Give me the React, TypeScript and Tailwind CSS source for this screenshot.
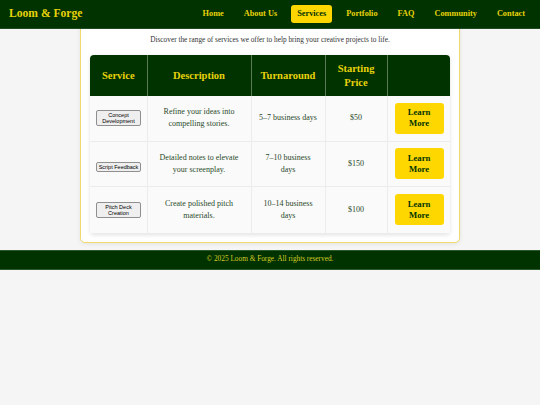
import React from "react";

const serif = { fontFamily: '"Liberation Serif", "DejaVu Serif", serif' };

const rows = [
  { svc: ["Concept", "Development"], desc: "Refine your ideas into compelling stories.", turn: "5–7 business days", price: "$50" },
  { svc: ["Script Feedback"], desc: "Detailed notes to elevate your screenplay.", turn: "7–10 business days", price: "$150" },
  { svc: ["Pitch Deck", "Creation"], desc: "Create polished pitch materials.", turn: "10–14 business days", price: "$100" },
];

const nav = ["Home", "About Us", "Services", "Portfolio", "FAQ", "Community", "Contact"];

export default function App() {
  return (
    <div className="min-h-[405px] bg-[#f5f5f5] text-[#1f3a1f]" style={serif}>
      <header className="fixed top-0 left-0 right-0 z-10 h-[29px] bg-[#003300] border-b border-[#1e4a1e] flex items-center justify-between pl-[9px] pr-[9px]">
        <div className="text-[11.6px] font-bold text-[#e8d20a] leading-[14px]">Loom &amp; Forge</div>
        <nav className="flex items-center gap-[8px]">
          {nav.map((n) => (
            <span
              key={n}
              className={
                "px-[6px] py-[4px] rounded-[3px] text-[8.3px] font-bold leading-[10px] " +
                (n === "Services" ? "bg-[#ffd700] text-[#003300]" : "text-[#e8d20a]")
              }
            >
              {n}
            </span>
          ))}
        </nav>
      </header>

      <main className="flex justify-center">
        <section className="w-[380px] bg-white border border-[#f0d96a] rounded-[5px] shadow-[0_1px_4px_rgba(0,0,0,0.08)] px-[9px] pt-[8px] pb-[8px]">
          <h2 className="text-center text-[15px] font-bold text-[#003300] leading-[20px]">Our Services</h2>
          <p className="text-center text-[7.3px] text-[#333] leading-[10px] mt-[6px]">
            Discover the range of services we offer to help bring your creative projects to life.
          </p>
          <div className="mt-[10px] rounded-[4px] overflow-hidden shadow-[0_1px_4px_rgba(0,0,0,0.12)]">
            <table className="w-full table-fixed border-collapse">
              <colgroup>
                <col className="w-[57px]" />
                <col className="w-[104px]" />
                <col className="w-[74px]" />
                <col className="w-[62px]" />
                <col className="w-[63px]" />
              </colgroup>
              <thead>
                <tr className="bg-[#003300] h-[41px]">
                  {["Service", "Description", "Turnaround", "Starting Price", ""].map((h, i) => (
                    <th
                      key={i}
                      className={
                        "text-[#e8d20a] text-[10.5px] font-bold leading-[14px] px-[4px] " +
                        (i < 4 ? "border-r border-[#5a7a5a]" : "")
                      }
                    >
                      {h === "Starting Price" ? (
                        <>
                          Starting
                          <br />
                          Price
                        </>
                      ) : (
                        h
                      )}
                    </th>
                  ))}
                </tr>
              </thead>
              <tbody>
                {rows.map((r, idx) => (
                  <tr key={idx} className={"bg-[#fafafa] " + (idx === 2 ? "h-[47px]" : "h-[45px]")}>
                    <td className="border-r border-b border-[#ececec] text-center px-[6px]">
                      <button
                        className="w-[45px] bg-[#efefef] border border-[#8f8f8f] rounded-[2px] text-[5.5px] leading-[6px] text-black py-[1px]"
                        style={{ fontFamily: '"Liberation Sans", Arial, sans-serif' }}
                      >
                        {r.svc.map((s, i) => (
                          <span key={i} className="block">
                            {s}
                          </span>
                        ))}
                      </button>
                    </td>
                    <td className="border-r border-b border-[#ececec] text-center text-[8px] leading-[12px] text-[#2a4a2a] px-[11px]">
                      {r.desc}
                    </td>
                    <td className="border-r border-b border-[#ececec] text-center text-[8px] leading-[12px] text-[#2a4a2a] px-[6px]">
                      {r.turn}
                    </td>
                    <td className="border-r border-b border-[#ececec] text-center text-[8px] leading-[12px] text-[#2a4a2a]">
                      {r.price}
                    </td>
                    <td className="border-b border-[#ececec] text-center px-[7px]">
                      <button className="w-[49px] h-[31px] bg-[#ffd700] rounded-[3px] text-[8.7px] font-bold leading-[11px] text-[#003300]">
                        Learn
                        <br />
                        More
                      </button>
                    </td>
                  </tr>
                ))}
              </tbody>
            </table>
          </div>
        </section>
      </main>

      <footer className="mt-[7px] h-[20px] bg-[#003300] border-y border-[#2a5a2a] flex items-center justify-center">
        <span className="text-[7.3px] text-[#d6cc2a]">© 2025 Loom &amp; Forge. All rights reserved.</span>
      </footer>
    </div>
  );
}
